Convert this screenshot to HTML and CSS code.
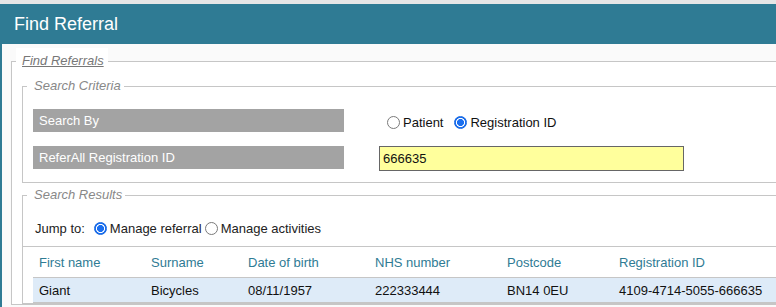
FILE: index.html
```html
<!DOCTYPE html>
<html lang="en">
<head>
  <meta charset="UTF-8">
  <title>Find Referral</title>
  <link rel="stylesheet" href="styles.css">
</head>
<body>

  <div class="panel">
    <h1 class="panel-head">Find Referral</h1>

    <div class="panel-body">
      <fieldset class="outer">
        <legend class="outer-legend">Find Referrals</legend>

        <fieldset class="group criteria">
          <legend>Search Criteria</legend>

          <div class="form-row">
            <div class="label-bar">Search By</div>
            <div class="field radios">
              <label><input type="radio" name="by"> Patient</label>
              <label><input type="radio" name="by" checked> Registration ID</label>
            </div>
          </div>

          <div class="form-row">
            <div class="label-bar">ReferAll Registration ID</div>
            <div class="field">
              <input type="text" class="reg-input" value="666635">
            </div>
          </div>
        </fieldset>

        <fieldset class="group results">
          <legend>Search Results</legend>

          <div class="jump">
            <span class="jump-label">Jump to:</span>
            <label><input type="radio" name="jump" checked> Manage referral</label>
            <label><input type="radio" name="jump"> Manage activities</label>
          </div>

          <table class="results-table">
            <thead>
              <tr>
                <th class="c1">First name</th>
                <th class="c2">Surname</th>
                <th class="c3">Date of birth</th>
                <th class="c4">NHS number</th>
                <th class="c5">Postcode</th>
                <th>Registration ID</th>
              </tr>
            </thead>
            <tbody>
              <tr>
                <td>Giant</td>
                <td>Bicycles</td>
                <td>08/11/1957</td>
                <td>222333444</td>
                <td>BN14 0EU</td>
                <td>4109-4714-5055-666635</td>
              </tr>
            </tbody>
          </table>
        </fieldset>
      </fieldset>
    </div>
  </div>

</body>
</html>
```

FILE: styles.css
```css
html, body {
  overflow: hidden;
}

body {
  margin: 0;
  padding-top: 4px;
  background-color: #e6e6e6;
  font-family: "Liberation Sans", Arial, sans-serif;
  font-size: 13px;
  color: #111;
}

.panel {
  width: 820px;
  height: 303px;
  overflow: hidden;
  border-left: 2px solid #2f7b94;
  background-color: #fafafa;
}

.panel-head {
  margin: 0;
  height: 40px;
  line-height: 40px;
  padding-left: 12px;
  background-color: #2f7b94;
  color: white;
  font-size: 18px;
  font-weight: normal;
}

.panel-body {
  padding: 4px 0 0 9px;
}

fieldset {
  margin: 0;
  border: 1px solid #c6c6c6;
  background-color: white;
}

legend {
  font-style: italic;
  color: #888;
  line-height: 16px;
  margin-left: -6px;
  padding: 0 3px 0 7px;
}

.outer {
  padding: 4px 0 0 10px;
}

.outer-legend {
  color: #777;
  text-decoration: underline;
  padding: 5px 4px 5px 6px;
  background-color: white;
}

.group {
  padding: 0;
}

.criteria {
  padding: 15px 10px 11px;
}

.form-row {
  display: flex;
  align-items: flex-start;
  margin-bottom: 12px;
}

.form-row:last-child {
  margin-bottom: 0;
}

.label-bar {
  width: 305px;
  height: 23px;
  line-height: 23px;
  padding-left: 6px;
  background-color: #a3a3a3;
  color: white;
}

.field {
  margin-left: 35px;
}

.radios {
  display: flex;
  align-items: center;
  height: 23px;
  padding: 2px 0 0 8px;
}

.radios label {
  display: flex;
  align-items: center;
  margin-right: 11px;
}

input[type="radio"] {
  appearance: none;
  width: 13px;
  height: 13px;
  margin: 0 3px 0 0;
  border: 1px solid #7a7a7a;
  border-radius: 50%;
  background-color: white;
}

input[type="radio"]:checked {
  border: 1px solid #1566e0;
  background: radial-gradient(circle, #1a6ff0 0 3.2px, white 3.8px 4.3px, #1a6ff0 4.8px);
}

.reg-input {
  width: 305px;
  height: 25px;
  box-sizing: border-box;
  border: 1px solid #666;
  background-color: #ffff9c;
  padding: 0 3px;
  font-family: inherit;
  font-size: 13px;
  color: #111;
  outline: none;
}

.results {
  margin-top: 4px;
}

.results legend {
  margin-left: 4px;
}

.jump {
  display: flex;
  align-items: center;
  height: 20px;
  padding: 15px 12px 8px;
  border-bottom: 1px solid #c6c6c6;
  color: #222;
}

.jump-label {
  margin-right: 9px;
}

.jump label {
  display: flex;
  align-items: center;
  margin-right: 3px;
}

.results-table {
  margin-left: 10px;
  width: 780px;
  border-collapse: collapse;
}

.results-table th,
.results-table td {
  text-align: left;
  padding: 0 6px;
  white-space: nowrap;
}

.results-table th {
  height: 30px;
  font-weight: normal;
  color: #2f7b94;
  border-bottom: 1px solid #c6c6c6;
}

.results-table td {
  height: 24px;
  background-color: #deebf8;
  color: #111;
  border-bottom: 1px solid #c6c6c6;
}

.c1 { width: 100px; }
.c2 { width: 85px; }
.c3 { width: 115px; }
.c4 { width: 120px; }
.c5 { width: 100px; }
```
